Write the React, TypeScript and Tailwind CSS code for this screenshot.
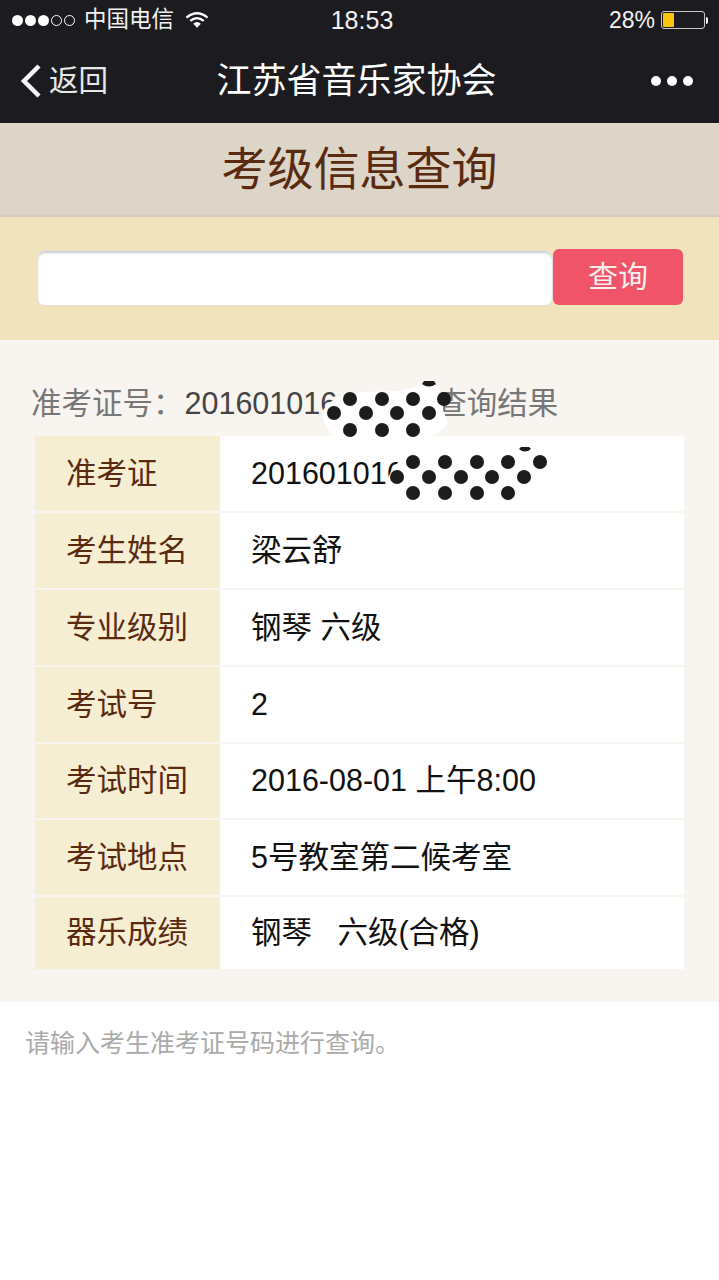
const rows = [
  { label: "准考证", value: "201601016", height: "h-[75px]" },
  { label: "考生姓名", value: "梁云舒", height: "h-[75px]" },
  { label: "专业级别", value: "钢琴 六级", height: "h-[75px]" },
  { label: "考试号", value: "2", height: "h-[75px]" },
  { label: "考试时间", value: "2016-08-01 上午8:00", height: "h-[74px]" },
  { label: "考试地点", value: "5号教室第二候考室", height: "h-[75px]" },
  { label: "器乐成绩", value: "钢琴\u00a0\u00a0\u00a0六级(合格)", height: "h-[72px]" },
]

function Dots({ dots }: { dots: number[][] }) {
  return (
    <>
      {dots.map(([x, y]) => (
        <circle key={`${x}-${y}`} cx={x} cy={y} r="7" fill="#1c1c1c" />
      ))}
    </>
  )
}

// scribbled-out parts of the exam number, drawn over the text
function Redaction() {
  const first = [
    [350, 399], [382, 399], [413, 399], [444, 399],
    [334, 413], [366, 413], [397, 413], [429, 413],
    [350, 430], [382, 430], [413, 430],
  ]
  const second = [
    [413, 462], [445, 462], [477, 462], [508, 462], [540, 462],
    [397, 477], [429, 477], [461, 477], [492, 477], [524, 477],
    [413, 493], [445, 493], [477, 493], [508, 493],
  ]
  return (
    <svg className="absolute left-0 top-0" width="719" height="520" viewBox="0 0 719 520">
      <path d="M322 412 Q332 394 360 392 L400 391 Q420 384 436 385 Q444 392 443 410 L448 422 Q440 436 418 442 L340 442 Q324 430 322 412 Z" fill="#fff" />
      <path d="M388 478 Q396 456 424 450 L520 447 Q546 450 548 470 Q546 490 530 500 L410 503 Q392 496 388 478 Z" fill="#fff" />
      <Dots dots={first} />
      <Dots dots={second} />
      <path d="M422 384 Q429 389 436 384 L434 381 L424 381 Z" fill="#1c1c1c" />
      <path d="M519 449 Q525 454 531 449 L529 447 L521 447 Z" fill="#1c1c1c" />
    </svg>
  )
}

function StatusBar() {
  return (
    <div className="flex h-[40px] items-center justify-between pl-[12px] pr-[11px] text-[#f2f2f2]">
      <div className="flex w-[242px] items-center">
        <div className="flex items-center gap-[2px]">
          <span className="h-[11px] w-[11px] rounded-full bg-white" />
          <span className="h-[11px] w-[11px] rounded-full bg-white" />
          <span className="h-[11px] w-[11px] rounded-full bg-white" />
          <span className="h-[11px] w-[11px] rounded-full border border-white" />
          <span className="h-[11px] w-[11px] rounded-full border border-white" />
        </div>
        <span className="ml-[9px] text-[22.5px] leading-none">中国电信</span>
        <svg className="ml-[11px]" width="24" height="18" viewBox="0 0 25 18" fill="none" stroke="#fff" strokeWidth="2.4">
          <path d="M1.5 6.5 Q12.5 -2.5 23.5 6.5" />
          <path d="M5.5 10 Q12.5 4 19.5 10" />
          <path d="M12.5 17 L8.5 12.8 Q12.5 9.6 16.5 12.8 Z" fill="#fff" stroke="none" />
        </svg>
      </div>
      <span className="text-[25px] leading-none">18:53</span>
      <div className="flex w-[238px] items-center justify-end">
        <span className="text-[23px] leading-none">28%</span>
        <div className="ml-[6px] flex h-[18px] w-[44px] items-center rounded-[3px] border border-[#c9c9c9] p-[1px]">
          <div className="h-full w-[11px] rounded-[1px] bg-[#fcc40f]" />
        </div>
        <div className="ml-[1px] h-[7px] w-[2px] rounded-r-full bg-white" />
      </div>
    </div>
  )
}

function NavBar() {
  return (
    <div className="flex h-[83px] items-center justify-between pl-[20px] pr-[26px] pb-[2px] text-white">
      <div className="flex w-[150px] items-center">
        <svg width="22" height="34" viewBox="0 0 22 34" fill="none" stroke="#f5f5f5" strokeWidth="4.5">
          <path d="M19 2 L4 17 L19 32" />
        </svg>
        <span className="ml-[7px] text-[29.5px] leading-none text-[#e8e8e8]">返回</span>
      </div>
      <span className="text-[35px] leading-none">江苏省音乐家协会</span>
      <div className="flex w-[150px] justify-end gap-[6px]">
        <span className="h-[10px] w-[10px] rounded-full bg-white" />
        <span className="h-[10px] w-[10px] rounded-full bg-white" />
        <span className="h-[10px] w-[10px] rounded-full bg-white" />
      </div>
    </div>
  )
}

export default function App() {
  return (
    <div
      className="relative min-h-[1280px] bg-white"
      style={{ fontFamily: '"Liberation Sans", "Noto Sans CJK SC", sans-serif' }}
    >
      <div className="h-[123px] bg-[#1b1b20]">
        <StatusBar />
        <NavBar />
      </div>

      <div className="flex h-[94px] items-center justify-center border-b-2 border-[#d5cdbf] bg-[#ddd5c7]">
        <h1 className="text-[46px] leading-none text-[#5a2a10]">考级信息查询</h1>
      </div>

      <div className="flex h-[123px] items-center bg-[#f1e3bc] pb-[2px] pl-[37px]">
        <input className="h-[56px] w-[516px] rounded-[8px] border border-[#e4dfd8] bg-white shadow-[inset_0_3px_3px_-1px_#c9c8cf]" />
        <button className="h-[56px] w-[130px] -translate-y-px rounded-[6px] bg-[#ef5468] text-[30px] text-[#fbeeee]">查询</button>
      </div>

      <div className="h-[662px] bg-[#f8f4f0] px-[35px] pt-[40px]">
        <p className="-ml-[4px] h-[56px] text-[30.5px] leading-[46px] text-[#777]">
          准考证号：<span className="ml-[1px] text-[#444]">201601016</span>
          <span className="ml-[99px]">查询结果</span>
        </p>
        <div className="flex w-[649px] flex-col gap-[2px]">
          {rows.map((row) => (
            <div key={row.label} className={`flex bg-white ${row.height}`}>
              <div className="flex w-[185px] items-center bg-[#f5eed3] pl-[31px] text-[30.5px] text-[#5a2a10]">
                {row.label}
              </div>
              <div className="flex items-center pl-[31px] text-[30.5px] text-[#111]">{row.value}</div>
            </div>
          ))}
        </div>
      </div>

      <p className="pl-[25px] pt-[24px] text-[25px] leading-[34px] text-[#aaa]">请输入考生准考证号码进行查询。</p>

      <Redaction />
    </div>
  )
}
